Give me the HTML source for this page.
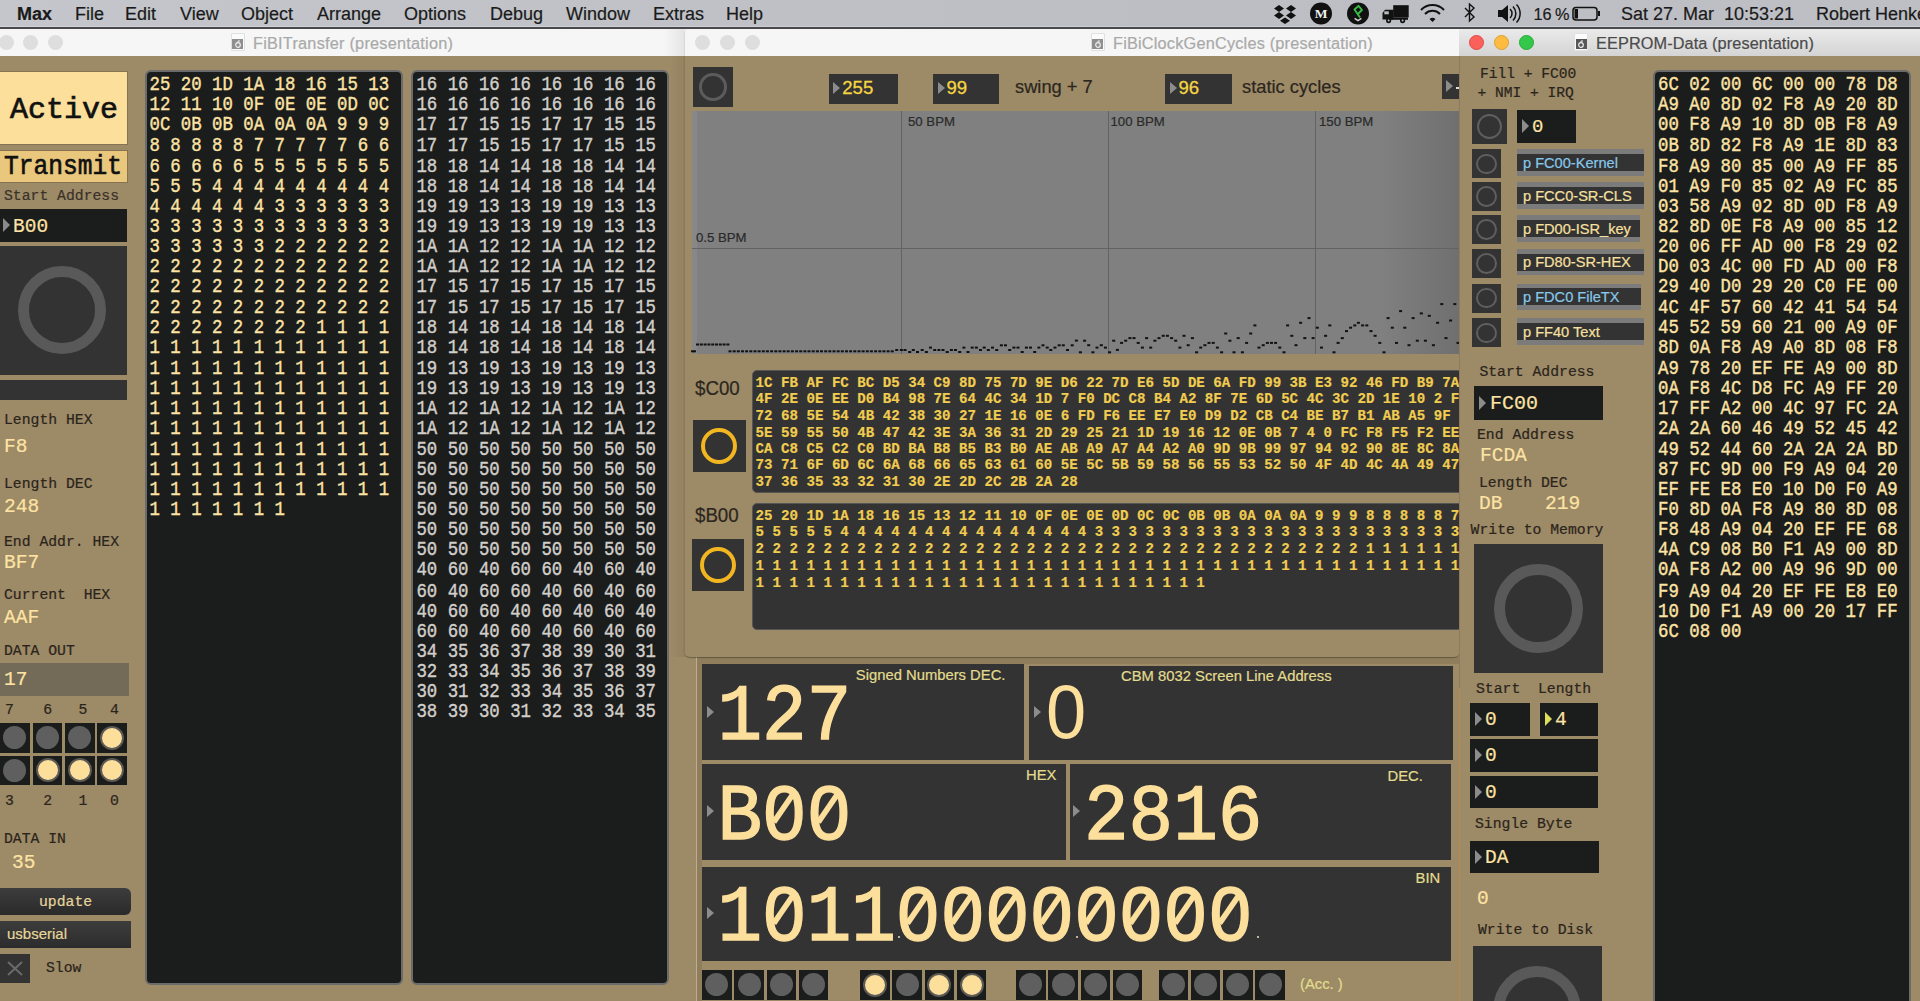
<!DOCTYPE html><html><head><meta charset="utf-8"><style>
html,body{margin:0;padding:0;width:1920px;height:1001px;overflow:hidden;background:#9d8a66;}
body>div, .w div{position:absolute;box-sizing:border-box;-webkit-text-stroke:0.2px currentColor;}
</style></head><body>
<div style="left:0px;top:28px;width:686px;height:973px;background:#9d8a66;"></div>
<div style="left:0px;top:28px;width:686px;height:28px;background:#f6f6f6;"></div>
<div style="left:-1.5px;top:34.5px;width:15px;height:15px;background:#dedede;border-radius:50%"></div>
<div style="left:22.5px;top:34.5px;width:15px;height:15px;background:#dedede;border-radius:50%"></div>
<div style="left:47.5px;top:34.5px;width:15px;height:15px;background:#dedede;border-radius:50%"></div>
<div style="left:230.6px;top:33px;width:14px;height:18px;background:#fbfbfb;border:1px solid #e0e0e0;border-radius:1px"></div>
<div style="left:232.1px;top:38.6px;width:11px;height:10px;background:#8f8f8f;"></div>
<svg style="position:absolute;left:233.6px;top:39.5px" width="8" height="8"><circle cx="4" cy="5" r="2.3" stroke="#eee" stroke-width="1.2" fill="none"/><path d="M4 2.5 v-1.5 h2" stroke="#eee" stroke-width="1" fill="none"/></svg>
<div style="left:253px;top:32.95px;font-family:'Liberation Sans', sans-serif;font-size:16.3px;line-height:20.000px;color:#a9a9a9;font-weight:normal;white-space:pre;letter-spacing:0.23px">FiBITransfer (presentation)</div>
<div style="left:0px;top:71px;width:128px;height:74px;background:#fddf9c;border:1px solid #857351;border-left:none"></div>
<div style="left:10px;top:92.02px;font-family:'Liberation Mono', monospace;font-size:30px;line-height:36.000px;color:#111;font-weight:normal;white-space:pre;-webkit-text-stroke:0.7px #111">Active</div>
<div style="left:0px;top:150px;width:128px;height:33px;background:#e9c77d;border:1px solid #857351;border-left:none"></div>
<div style="left:4px;top:152.30px;font-family:'Liberation Mono', monospace;font-size:24.6px;line-height:27.273px;color:#111;font-weight:normal;white-space:pre;transform:scaleY(1.1);transform-origin:0 0;-webkit-text-stroke:0.6px #111">Transmit</div>
<div style="left:4px;top:187.08px;font-family:'Liberation Mono', monospace;font-size:14.75px;line-height:18.000px;color:#3a3128;font-weight:normal;white-space:pre;">Start Address</div>
<div style="left:0px;top:209px;width:127px;height:33px;background:#1b1c1c;"></div>
<div style="left:3px;top:218px;width:0;height:0;border-top:7px solid transparent;border-bottom:7px solid transparent;border-left:7px solid #8a8a8a"></div>
<div style="left:13px;top:216.31px;font-family:'Liberation Mono', monospace;font-size:19.5px;line-height:23.000px;color:#fde3a4;font-weight:normal;white-space:pre;">B00</div>
<div style="left:0px;top:246px;width:127px;height:129px;background:#333333;"></div>
<div style="left:18px;top:266px;width:88px;height:88px;background:transparent;border:11px solid #595959;border-radius:50%"></div>
<div style="left:0px;top:380px;width:127px;height:20px;background:#333333;"></div>
<div style="left:4px;top:411.08px;font-family:'Liberation Mono', monospace;font-size:14.75px;line-height:18.000px;color:#2a241c;font-weight:normal;white-space:pre;">Length HEX</div>
<div style="left:4px;top:436.31px;font-family:'Liberation Mono', monospace;font-size:19.5px;line-height:23.000px;color:#fde3a4;font-weight:normal;white-space:pre;">F8</div>
<div style="left:4px;top:474.58px;font-family:'Liberation Mono', monospace;font-size:14.75px;line-height:18.000px;color:#2a241c;font-weight:normal;white-space:pre;">Length DEC</div>
<div style="left:4px;top:496.01px;font-family:'Liberation Mono', monospace;font-size:19.5px;line-height:23.000px;color:#fde3a4;font-weight:normal;white-space:pre;">248</div>
<div style="left:4px;top:533.08px;font-family:'Liberation Mono', monospace;font-size:14.75px;line-height:18.000px;color:#2a241c;font-weight:normal;white-space:pre;">End Addr. HEX</div>
<div style="left:4px;top:552.31px;font-family:'Liberation Mono', monospace;font-size:19.5px;line-height:23.000px;color:#fde3a4;font-weight:normal;white-space:pre;">BF7</div>
<div style="left:4px;top:586.08px;font-family:'Liberation Mono', monospace;font-size:14.75px;line-height:18.000px;color:#2a241c;font-weight:normal;white-space:pre;">Current  HEX</div>
<div style="left:4px;top:607.31px;font-family:'Liberation Mono', monospace;font-size:19.5px;line-height:23.000px;color:#fde3a4;font-weight:normal;white-space:pre;">AAF</div>
<div style="left:4px;top:642.08px;font-family:'Liberation Mono', monospace;font-size:14.75px;line-height:18.000px;color:#2a241c;font-weight:normal;white-space:pre;">DATA OUT</div>
<div style="left:0px;top:663px;width:129px;height:33px;background:#736a58;"></div>
<div style="left:4px;top:669.31px;font-family:'Liberation Mono', monospace;font-size:19.5px;line-height:23.000px;color:#fde3a4;font-weight:normal;white-space:pre;">17</div>
<div style="left:5px;top:701.08px;font-family:'Liberation Mono', monospace;font-size:14.75px;line-height:18.000px;color:#2a241c;font-weight:normal;white-space:pre;">7</div>
<div style="left:43.3px;top:701.08px;font-family:'Liberation Mono', monospace;font-size:14.75px;line-height:18.000px;color:#2a241c;font-weight:normal;white-space:pre;">6</div>
<div style="left:78.6px;top:701.08px;font-family:'Liberation Mono', monospace;font-size:14.75px;line-height:18.000px;color:#2a241c;font-weight:normal;white-space:pre;">5</div>
<div style="left:110px;top:701.08px;font-family:'Liberation Mono', monospace;font-size:14.75px;line-height:18.000px;color:#2a241c;font-weight:normal;white-space:pre;">4</div>
<div style="left:5px;top:792.08px;font-family:'Liberation Mono', monospace;font-size:14.75px;line-height:18.000px;color:#2a241c;font-weight:normal;white-space:pre;">3</div>
<div style="left:43.3px;top:792.08px;font-family:'Liberation Mono', monospace;font-size:14.75px;line-height:18.000px;color:#2a241c;font-weight:normal;white-space:pre;">2</div>
<div style="left:78.6px;top:792.08px;font-family:'Liberation Mono', monospace;font-size:14.75px;line-height:18.000px;color:#2a241c;font-weight:normal;white-space:pre;">1</div>
<div style="left:110px;top:792.08px;font-family:'Liberation Mono', monospace;font-size:14.75px;line-height:18.000px;color:#2a241c;font-weight:normal;white-space:pre;">0</div>
<div style="left:0px;top:723px;width:29.5px;height:29.5px;background:#1b1c1c;"></div>
<div style="left:3.25px;top:726.25px;width:23px;height:23px;background:#5f5f5f;border-radius:50%"></div>
<div style="left:0px;top:755.5px;width:29.5px;height:29.5px;background:#1b1c1c;"></div>
<div style="left:3.25px;top:758.75px;width:23px;height:23px;background:#5f5f5f;border-radius:50%"></div>
<div style="left:32.8px;top:723px;width:29.5px;height:29.5px;background:#1b1c1c;"></div>
<div style="left:36.05px;top:726.25px;width:23px;height:23px;background:#5f5f5f;border-radius:50%"></div>
<div style="left:32.8px;top:755.5px;width:29.5px;height:29.5px;background:#1b1c1c;"></div>
<div style="left:35.55px;top:758.25px;width:24px;height:24px;background:#fddf9c;border:2.5px solid #5c5a55;border-radius:50%"></div>
<div style="left:65.1px;top:723px;width:29.5px;height:29.5px;background:#1b1c1c;"></div>
<div style="left:68.35px;top:726.25px;width:23px;height:23px;background:#5f5f5f;border-radius:50%"></div>
<div style="left:65.1px;top:755.5px;width:29.5px;height:29.5px;background:#1b1c1c;"></div>
<div style="left:67.85px;top:758.25px;width:24px;height:24px;background:#fddf9c;border:2.5px solid #5c5a55;border-radius:50%"></div>
<div style="left:97.39999999999999px;top:723px;width:29.5px;height:29.5px;background:#1b1c1c;"></div>
<div style="left:100.14999999999999px;top:725.75px;width:24px;height:24px;background:#fddf9c;border:2.5px solid #5c5a55;border-radius:50%"></div>
<div style="left:97.39999999999999px;top:755.5px;width:29.5px;height:29.5px;background:#1b1c1c;"></div>
<div style="left:100.14999999999999px;top:758.25px;width:24px;height:24px;background:#fddf9c;border:2.5px solid #5c5a55;border-radius:50%"></div>
<div style="left:4px;top:829.58px;font-family:'Liberation Mono', monospace;font-size:14.75px;line-height:18.000px;color:#2a241c;font-weight:normal;white-space:pre;">DATA IN</div>
<div style="left:12px;top:852.31px;font-family:'Liberation Mono', monospace;font-size:19.5px;line-height:23.000px;color:#fde3a4;font-weight:normal;white-space:pre;">35</div>
<div style="left:0px;top:888px;width:131px;height:27px;background:linear-gradient(#3d3d3d,#2a2a2a);border-radius:6px;border-top-left-radius:0;border-bottom-left-radius:0"></div>
<div style="left:39px;top:893.08px;font-family:'Liberation Mono', monospace;font-size:14.75px;line-height:18.000px;color:#e6d59a;font-weight:normal;white-space:pre;">update</div>
<div style="left:0px;top:921px;width:131px;height:27px;background:linear-gradient(#3d3d3d,#2c2c2c);"></div>
<div style="left:7px;top:925.30px;font-family:'Liberation Sans', sans-serif;font-size:15px;line-height:18.000px;color:#e6d59a;font-weight:normal;white-space:pre;">usbserial</div>
<div style="left:0px;top:954px;width:30px;height:29px;background:#333333;"></div>
<svg style="position:absolute;left:0;top:954px" width="30" height="29"><path d="M8 8 L22 21 M22 8 L8 21" stroke="#6a6a6a" stroke-width="2"/></svg>
<div style="left:46px;top:959.08px;font-family:'Liberation Mono', monospace;font-size:14.75px;line-height:18.000px;color:#2a241c;font-weight:normal;white-space:pre;">Slow</div>
<div style="left:145px;top:70px;width:258px;height:915px;background:#1b1c1c;border:2px solid #6b6b6b;border-radius:6px"></div>
<div style="left:411px;top:70px;width:257.5px;height:915px;background:#1b1c1c;border:2px solid #6b6b6b;border-radius:6px"></div>
<div style="left:149.5px;top:74.83px;font-family:'Liberation Mono', monospace;font-size:17.38px;line-height:17.136px;color:#fde3a4;font-weight:normal;white-space:pre;transform:scaleY(1.18);transform-origin:0 0;-webkit-text-stroke:0.35px #fde3a4">25 20 1D 1A 18 16 15 13
12 11 10 0F 0E 0E 0D 0C
0C 0B 0B 0A 0A 0A 9 9 9
8 8 8 8 8 7 7 7 7 7 6 6
6 6 6 6 6 5 5 5 5 5 5 5
5 5 5 4 4 4 4 4 4 4 4 4
4 4 4 4 4 4 3 3 3 3 3 3
3 3 3 3 3 3 3 3 3 3 3 3
3 3 3 3 3 3 2 2 2 2 2 2
2 2 2 2 2 2 2 2 2 2 2 2
2 2 2 2 2 2 2 2 2 2 2 2
2 2 2 2 2 2 2 2 2 2 2 2
2 2 2 2 2 2 2 2 1 1 1 1
1 1 1 1 1 1 1 1 1 1 1 1
1 1 1 1 1 1 1 1 1 1 1 1
1 1 1 1 1 1 1 1 1 1 1 1
1 1 1 1 1 1 1 1 1 1 1 1
1 1 1 1 1 1 1 1 1 1 1 1
1 1 1 1 1 1 1 1 1 1 1 1
1 1 1 1 1 1 1 1 1 1 1 1
1 1 1 1 1 1 1 1 1 1 1 1
1 1 1 1 1 1 1</div>
<div style="left:416.4px;top:74.83px;font-family:'Liberation Mono', monospace;font-size:17.38px;line-height:17.136px;color:#d2cfca;font-weight:normal;white-space:pre;transform:scaleY(1.18);transform-origin:0 0;-webkit-text-stroke:0.35px #d2cfca">16 16 16 16 16 16 16 16
16 16 16 16 16 16 16 16
17 17 15 15 17 17 15 15
17 17 15 15 17 17 15 15
18 18 14 14 18 18 14 14
18 18 14 14 18 18 14 14
19 19 13 13 19 19 13 13
19 19 13 13 19 19 13 13
1A 1A 12 12 1A 1A 12 12
1A 1A 12 12 1A 1A 12 12
17 15 17 15 17 15 17 15
17 15 17 15 17 15 17 15
18 14 18 14 18 14 18 14
18 14 18 14 18 14 18 14
19 13 19 13 19 13 19 13
19 13 19 13 19 13 19 13
1A 12 1A 12 1A 12 1A 12
1A 12 1A 12 1A 12 1A 12
50 50 50 50 50 50 50 50
50 50 50 50 50 50 50 50
50 50 50 50 50 50 50 50
50 50 50 50 50 50 50 50
50 50 50 50 50 50 50 50
50 50 50 50 50 50 50 50
40 60 40 60 60 40 60 40
60 40 60 60 40 60 40 60
40 60 60 40 60 40 60 40
60 60 40 60 40 60 40 60
34 35 36 37 38 39 30 31
32 33 34 35 36 37 38 39
30 31 32 33 34 35 36 37
38 39 30 31 32 33 34 35</div>
<div style="left:684px;top:657px;width:776px;height:344px;background:#9d8a66;"></div>
<div style="left:696px;top:657px;width:1px;height:344px;background:#b9ad95;"></div>
<div style="left:697px;top:657px;width:5px;height:344px;background:#8f7d5c;"></div>
<div style="left:697px;top:657px;width:763px;height:7px;background:#8f7d5c;"></div>
<div style="left:702px;top:664px;width:322.4px;height:96.3px;background:#333333;"></div>
<div style="left:1029.4px;top:665.6px;width:423.6px;height:94.4px;background:#333333;"></div>
<div style="left:702px;top:763.8px;width:364px;height:96.5px;background:#333333;"></div>
<div style="left:1069.7px;top:763.8px;width:381.3px;height:96.2px;background:#333333;"></div>
<div style="left:702px;top:866.7px;width:749px;height:94.6px;background:#333333;"></div>
<div style="left:706.8px;top:705.8px;width:0;height:0;border-top:6.85px solid transparent;border-bottom:6.85px solid transparent;border-left:7.8px solid #8c8c8c"></div>
<div style="left:1034px;top:705.5px;width:0;height:0;border-top:6.85px solid transparent;border-bottom:6.85px solid transparent;border-left:7.8px solid #8c8c8c"></div>
<div style="left:706.8px;top:805px;width:0;height:0;border-top:6.85px solid transparent;border-bottom:6.85px solid transparent;border-left:7.8px solid #8c8c8c"></div>
<div style="left:1073px;top:805px;width:0;height:0;border-top:6.85px solid transparent;border-bottom:6.85px solid transparent;border-left:7.8px solid #8c8c8c"></div>
<div style="left:706.8px;top:907px;width:0;height:0;border-top:6.85px solid transparent;border-bottom:6.85px solid transparent;border-left:7.8px solid #8c8c8c"></div>
<div style="left:855.8px;top:665.57px;font-family:'Liberation Sans', sans-serif;font-size:14.8px;line-height:18.000px;color:#e2dc8e;font-weight:normal;white-space:pre;">Signed Numbers DEC.</div>
<div style="left:1121px;top:667.27px;font-family:'Liberation Sans', sans-serif;font-size:14.8px;line-height:18.000px;color:#e2dc8e;font-weight:normal;white-space:pre;">CBM 8032 Screen Line Address</div>
<div style="left:1026px;top:766.47px;font-family:'Liberation Sans', sans-serif;font-size:14.8px;line-height:18.000px;color:#e2dc8e;font-weight:normal;white-space:pre;">HEX</div>
<div style="left:1387.5px;top:766.67px;font-family:'Liberation Sans', sans-serif;font-size:14.8px;line-height:18.000px;color:#e2dc8e;font-weight:normal;white-space:pre;">DEC.</div>
<div style="left:1415.6px;top:868.67px;font-family:'Liberation Sans', sans-serif;font-size:14.8px;line-height:18.000px;color:#e2dc8e;font-weight:normal;white-space:pre;">BIN</div>
<div style="left:717.5px;top:672.85px;font-family:'Liberation Mono', monospace;font-size:74.3px;line-height:82.407px;color:#fddf9c;font-weight:normal;white-space:pre;transform:scaleY(1.08);transform-origin:0 0;-webkit-text-stroke:1.4px #fddf9c">127</div>
<div style="left:1045px;top:665.65px;font-family:'Liberation Sans', sans-serif;font-size:76px;line-height:91.000px;color:#fddf9c;font-weight:normal;white-space:pre;-webkit-text-stroke:0;transform:scaleX(0.95)">0</div>
<div style="left:717.5px;top:772.65px;font-family:'Liberation Mono', monospace;font-size:74.3px;line-height:82.407px;color:#fddf9c;font-weight:normal;white-space:pre;transform:scaleY(1.08);transform-origin:0 0;-webkit-text-stroke:1.4px #fddf9c">B00</div>
<svg style="position:absolute;left:0;top:0;overflow:visible" width="1" height="1"><rect x="778.9" y="804.0" width="11.1" height="15.2" fill="#333333"/><line x1="773.8" y1="822.2" x2="793.7" y2="793.2" stroke="#fddf9c" stroke-width="5.6"/><rect x="823.5" y="804.0" width="11.1" height="15.2" fill="#333333"/><line x1="818.4" y1="822.2" x2="838.2" y2="793.2" stroke="#fddf9c" stroke-width="5.6"/></svg>
<div style="left:1084px;top:772.65px;font-family:'Liberation Mono', monospace;font-size:74.3px;line-height:82.407px;color:#fddf9c;font-weight:normal;white-space:pre;transform:scaleY(1.08);transform-origin:0 0;-webkit-text-stroke:1.4px #fddf9c">2816</div>
<div style="left:717.5px;top:873.75px;font-family:'Liberation Mono', monospace;font-size:74.3px;line-height:82.407px;color:#fddf9c;font-weight:normal;white-space:pre;transform:scaleY(1.08);transform-origin:0 0;-webkit-text-stroke:1.4px #fddf9c">101100000000</div>
<svg style="position:absolute;left:0;top:0;overflow:visible" width="1" height="1"><rect x="778.9" y="905.1" width="11.1" height="15.2" fill="#333333"/><line x1="773.8" y1="923.3" x2="793.7" y2="894.3" stroke="#fddf9c" stroke-width="5.6"/><rect x="912.6" y="905.1" width="11.1" height="15.2" fill="#333333"/><line x1="907.5" y1="923.3" x2="927.4" y2="894.3" stroke="#fddf9c" stroke-width="5.6"/><rect x="957.2" y="905.1" width="11.1" height="15.2" fill="#333333"/><line x1="952.1" y1="923.3" x2="972.0" y2="894.3" stroke="#fddf9c" stroke-width="5.6"/><rect x="1001.8" y="905.1" width="11.1" height="15.2" fill="#333333"/><line x1="996.7" y1="923.3" x2="1016.6" y2="894.3" stroke="#fddf9c" stroke-width="5.6"/><rect x="1046.4" y="905.1" width="11.1" height="15.2" fill="#333333"/><line x1="1041.3" y1="923.3" x2="1061.1" y2="894.3" stroke="#fddf9c" stroke-width="5.6"/><rect x="1090.9" y="905.1" width="11.1" height="15.2" fill="#333333"/><line x1="1085.8" y1="923.3" x2="1105.7" y2="894.3" stroke="#fddf9c" stroke-width="5.6"/><rect x="1135.5" y="905.1" width="11.1" height="15.2" fill="#333333"/><line x1="1130.4" y1="923.3" x2="1150.3" y2="894.3" stroke="#fddf9c" stroke-width="5.6"/><rect x="1180.1" y="905.1" width="11.1" height="15.2" fill="#333333"/><line x1="1175.0" y1="923.3" x2="1194.9" y2="894.3" stroke="#fddf9c" stroke-width="5.6"/><rect x="1224.7" y="905.1" width="11.1" height="15.2" fill="#333333"/><line x1="1219.6" y1="923.3" x2="1239.5" y2="894.3" stroke="#fddf9c" stroke-width="5.6"/></svg>
<div style="left:898px;top:936px;width:2px;height:2px;background:#bdb39a;"></div>
<div style="left:1076px;top:936px;width:2px;height:2px;background:#bdb39a;"></div>
<div style="left:1257px;top:936px;width:2px;height:2px;background:#bdb39a;"></div>
<div style="left:702.0px;top:970px;width:29.5px;height:29.5px;background:#1b1c1c;"></div>
<div style="left:705.25px;top:973.25px;width:23px;height:23px;background:#5f5f5f;border-radius:50%"></div>
<div style="left:734.3px;top:970px;width:29.5px;height:29.5px;background:#1b1c1c;"></div>
<div style="left:737.55px;top:973.25px;width:23px;height:23px;background:#5f5f5f;border-radius:50%"></div>
<div style="left:766.6px;top:970px;width:29.5px;height:29.5px;background:#1b1c1c;"></div>
<div style="left:769.85px;top:973.25px;width:23px;height:23px;background:#5f5f5f;border-radius:50%"></div>
<div style="left:798.9px;top:970px;width:29.5px;height:29.5px;background:#1b1c1c;"></div>
<div style="left:802.15px;top:973.25px;width:23px;height:23px;background:#5f5f5f;border-radius:50%"></div>
<div style="left:860.0px;top:970px;width:29.5px;height:29.5px;background:#1b1c1c;"></div>
<div style="left:862.75px;top:972.75px;width:24px;height:24px;background:#fddf9c;border:2.5px solid #5c5a55;border-radius:50%"></div>
<div style="left:892.3px;top:970px;width:29.5px;height:29.5px;background:#1b1c1c;"></div>
<div style="left:895.55px;top:973.25px;width:23px;height:23px;background:#5f5f5f;border-radius:50%"></div>
<div style="left:924.6px;top:970px;width:29.5px;height:29.5px;background:#1b1c1c;"></div>
<div style="left:927.35px;top:972.75px;width:24px;height:24px;background:#fddf9c;border:2.5px solid #5c5a55;border-radius:50%"></div>
<div style="left:956.9px;top:970px;width:29.5px;height:29.5px;background:#1b1c1c;"></div>
<div style="left:959.65px;top:972.75px;width:24px;height:24px;background:#fddf9c;border:2.5px solid #5c5a55;border-radius:50%"></div>
<div style="left:1016.0px;top:970px;width:29.5px;height:29.5px;background:#1b1c1c;"></div>
<div style="left:1019.25px;top:973.25px;width:23px;height:23px;background:#5f5f5f;border-radius:50%"></div>
<div style="left:1048.3px;top:970px;width:29.5px;height:29.5px;background:#1b1c1c;"></div>
<div style="left:1051.55px;top:973.25px;width:23px;height:23px;background:#5f5f5f;border-radius:50%"></div>
<div style="left:1080.6px;top:970px;width:29.5px;height:29.5px;background:#1b1c1c;"></div>
<div style="left:1083.85px;top:973.25px;width:23px;height:23px;background:#5f5f5f;border-radius:50%"></div>
<div style="left:1112.9px;top:970px;width:29.5px;height:29.5px;background:#1b1c1c;"></div>
<div style="left:1116.15px;top:973.25px;width:23px;height:23px;background:#5f5f5f;border-radius:50%"></div>
<div style="left:1158.5px;top:970px;width:29.5px;height:29.5px;background:#1b1c1c;"></div>
<div style="left:1161.75px;top:973.25px;width:23px;height:23px;background:#5f5f5f;border-radius:50%"></div>
<div style="left:1190.8px;top:970px;width:29.5px;height:29.5px;background:#1b1c1c;"></div>
<div style="left:1194.05px;top:973.25px;width:23px;height:23px;background:#5f5f5f;border-radius:50%"></div>
<div style="left:1223.1px;top:970px;width:29.5px;height:29.5px;background:#1b1c1c;"></div>
<div style="left:1226.35px;top:973.25px;width:23px;height:23px;background:#5f5f5f;border-radius:50%"></div>
<div style="left:1255.4px;top:970px;width:29.5px;height:29.5px;background:#1b1c1c;"></div>
<div style="left:1258.65px;top:973.25px;width:23px;height:23px;background:#5f5f5f;border-radius:50%"></div>
<div style="left:1300px;top:974.87px;font-family:'Liberation Sans', sans-serif;font-size:14.8px;line-height:18.000px;color:#e2dc8e;font-weight:normal;white-space:pre;">(Acc. )</div>
<div style="left:684px;top:56px;width:776px;height:601px;background:#9d8a66;border-radius:0 0 6px 6px;box-shadow:0 1px 1px rgba(0,0,0,0.3)"></div>
<div style="left:684px;top:56px;width:1px;height:601px;background:#8c7a58;"></div>
<div style="left:664px;top:29px;width:20px;height:27px;background:linear-gradient(90deg,rgba(0,0,0,0),rgba(0,0,0,0.07));"></div>
<div style="left:670px;top:56px;width:14px;height:601px;background:linear-gradient(90deg,rgba(0,0,0,0),rgba(0,0,0,0.06));"></div>
<div style="left:684px;top:28px;width:776px;height:28px;background:#f6f6f6;border-top-left-radius:5px;border-left:1px solid #d8d8d8"></div>
<div style="left:694.5px;top:34.5px;width:15px;height:15px;background:#dedede;border-radius:50%"></div>
<div style="left:719.5px;top:34.5px;width:15px;height:15px;background:#dedede;border-radius:50%"></div>
<div style="left:744.5px;top:34.5px;width:15px;height:15px;background:#dedede;border-radius:50%"></div>
<div style="left:1090.5px;top:33px;width:14px;height:18px;background:#fbfbfb;border:1px solid #e0e0e0;border-radius:1px"></div>
<div style="left:1092.0px;top:38.6px;width:11px;height:10px;background:#8f8f8f;"></div>
<svg style="position:absolute;left:1093.5px;top:39.5px" width="8" height="8"><circle cx="4" cy="5" r="2.3" stroke="#eee" stroke-width="1.2" fill="none"/><path d="M4 2.5 v-1.5 h2" stroke="#eee" stroke-width="1" fill="none"/></svg>
<div style="left:1113px;top:32.95px;font-family:'Liberation Sans', sans-serif;font-size:16.3px;line-height:20.000px;color:#a9a9a9;font-weight:normal;white-space:pre;letter-spacing:0.2px">FiBiClockGenCycles (presentation)</div>
<div style="left:693px;top:67px;width:40px;height:40px;background:#333333;"></div>
<div style="left:699.25px;top:73.25px;width:27.5px;height:27.5px;background:transparent;border:3px solid #5c5c5c;border-radius:50%"></div>
<div style="left:828.75px;top:73.5px;width:68.75px;height:30.5px;background:#333333;"></div>
<div style="left:833.25px;top:82px;width:0;height:0;border-top:6.8px solid transparent;border-bottom:6.8px solid transparent;border-left:7px solid #8c8c8c"></div>
<div style="left:842.25px;top:76.55px;font-family:'Liberation Sans', sans-serif;font-size:18.6px;line-height:22.000px;color:#f5d444;font-weight:normal;white-space:pre;-webkit-text-stroke:0.3px #f5d444">255</div>
<div style="left:933px;top:73.5px;width:66.4px;height:30.5px;background:#333333;"></div>
<div style="left:937.5px;top:82px;width:0;height:0;border-top:6.8px solid transparent;border-bottom:6.8px solid transparent;border-left:7px solid #8c8c8c"></div>
<div style="left:946.5px;top:76.55px;font-family:'Liberation Sans', sans-serif;font-size:18.6px;line-height:22.000px;color:#f5d444;font-weight:normal;white-space:pre;-webkit-text-stroke:0.3px #f5d444">99</div>
<div style="left:1165px;top:73.5px;width:66.7px;height:30.5px;background:#333333;"></div>
<div style="left:1169.5px;top:82px;width:0;height:0;border-top:6.8px solid transparent;border-bottom:6.8px solid transparent;border-left:7px solid #8c8c8c"></div>
<div style="left:1178.5px;top:76.55px;font-family:'Liberation Sans', sans-serif;font-size:18.6px;line-height:22.000px;color:#f5d444;font-weight:normal;white-space:pre;-webkit-text-stroke:0.3px #f5d444">96</div>
<div style="left:1015px;top:76.16px;font-family:'Liberation Sans', sans-serif;font-size:18.3px;line-height:22.000px;color:#2b2620;font-weight:normal;white-space:pre;">swing + 7</div>
<div style="left:1242px;top:75.96px;font-family:'Liberation Sans', sans-serif;font-size:18.3px;line-height:22.000px;color:#2b2620;font-weight:normal;white-space:pre;">static cycles</div>
<div style="left:1441.7px;top:74px;width:18px;height:25px;background:#333333;"></div>
<div style="left:1446px;top:80px;width:0;height:0;border-top:6.8px solid transparent;border-bottom:6.8px solid transparent;border-left:7px solid #8c8c8c"></div>
<div style="left:1456px;top:87px;width:3px;height:1.5px;background:#ddd;"></div>
<div style="left:692.2px;top:111px;width:767px;height:243px;background:#808080;"></div>
<div style="left:692.2px;top:111px;width:5px;height:243px;background:#888888;"></div>
<div style="left:1380px;top:111px;width:79px;height:243px;background:linear-gradient(90deg,rgba(0,0,0,0),rgba(0,0,0,0.13));"></div>
<div style="left:901px;top:111px;width:1.2px;height:243px;background:#636363;"></div>
<div style="left:1108px;top:111px;width:1.2px;height:243px;background:#636363;"></div>
<div style="left:1315px;top:111px;width:1.2px;height:243px;background:#636363;"></div>
<div style="left:692.2px;top:247.5px;width:767px;height:1.2px;background:#636363;"></div>
<div style="left:908px;top:114.42px;font-family:'Liberation Sans', sans-serif;font-size:13.2px;line-height:16.000px;color:#2a2a2a;font-weight:normal;white-space:pre;">50 BPM</div>
<div style="left:1110.5px;top:114.42px;font-family:'Liberation Sans', sans-serif;font-size:13.2px;line-height:16.000px;color:#2a2a2a;font-weight:normal;white-space:pre;">100 BPM</div>
<div style="left:1319px;top:114.42px;font-family:'Liberation Sans', sans-serif;font-size:13.2px;line-height:16.000px;color:#2a2a2a;font-weight:normal;white-space:pre;">150 BPM</div>
<div style="left:696px;top:229.92px;font-family:'Liberation Sans', sans-serif;font-size:13.2px;line-height:16.000px;color:#2a2a2a;font-weight:normal;white-space:pre;">0.5 BPM</div>
<svg style="position:absolute;left:0;top:0;overflow:visible" width="1" height="1"><rect x="696.0" y="343.5" width="3" height="2" fill="#111"/><rect x="699.8" y="343.5" width="3" height="2" fill="#111"/><rect x="703.6" y="343.5" width="3" height="2" fill="#111"/><rect x="707.4" y="343.5" width="3" height="2" fill="#111"/><rect x="711.2" y="343.5" width="3" height="2" fill="#111"/><rect x="715.0" y="343.5" width="3" height="2" fill="#111"/><rect x="718.8" y="343.5" width="3" height="2" fill="#111"/><rect x="722.6" y="343.5" width="3" height="2" fill="#111"/><rect x="726.4" y="343.5" width="3" height="2" fill="#111"/><rect x="691.0" y="350.3" width="3" height="2" fill="#111"/><rect x="693.0" y="350.3" width="3" height="2" fill="#111"/><rect x="728.5" y="350.3" width="3" height="2" fill="#111"/><rect x="732.7" y="350.3" width="3" height="2" fill="#111"/><rect x="736.8" y="350.3" width="3" height="2" fill="#111"/><rect x="741.0" y="350.3" width="3" height="2" fill="#111"/><rect x="745.1" y="350.3" width="3" height="2" fill="#111"/><rect x="749.3" y="350.3" width="3" height="2" fill="#111"/><rect x="753.5" y="350.3" width="3" height="2" fill="#111"/><rect x="757.6" y="350.3" width="3" height="2" fill="#111"/><rect x="761.8" y="350.3" width="3" height="2" fill="#111"/><rect x="765.9" y="350.3" width="3" height="2" fill="#111"/><rect x="770.1" y="350.3" width="3" height="2" fill="#111"/><rect x="774.3" y="350.3" width="3" height="2" fill="#111"/><rect x="778.4" y="350.3" width="3" height="2" fill="#111"/><rect x="782.6" y="350.3" width="3" height="2" fill="#111"/><rect x="786.7" y="350.3" width="3" height="2" fill="#111"/><rect x="790.9" y="350.3" width="3" height="2" fill="#111"/><rect x="795.1" y="350.3" width="3" height="2" fill="#111"/><rect x="799.2" y="350.3" width="3" height="2" fill="#111"/><rect x="803.4" y="350.3" width="3" height="2" fill="#111"/><rect x="807.5" y="350.3" width="3" height="2" fill="#111"/><rect x="811.7" y="350.3" width="3" height="2" fill="#111"/><rect x="815.9" y="350.3" width="3" height="2" fill="#111"/><rect x="820.0" y="350.3" width="3" height="2" fill="#111"/><rect x="824.2" y="350.3" width="3" height="2" fill="#111"/><rect x="828.3" y="350.3" width="3" height="2" fill="#111"/><rect x="832.5" y="350.3" width="3" height="2" fill="#111"/><rect x="836.7" y="350.3" width="3" height="2" fill="#111"/><rect x="840.8" y="350.3" width="3" height="2" fill="#111"/><rect x="845.0" y="350.3" width="3" height="2" fill="#111"/><rect x="849.1" y="350.3" width="3" height="2" fill="#111"/><rect x="853.3" y="350.3" width="3" height="2" fill="#111"/><rect x="857.5" y="350.3" width="3" height="2" fill="#111"/><rect x="861.6" y="350.3" width="3" height="2" fill="#111"/><rect x="865.8" y="350.3" width="3" height="2" fill="#111"/><rect x="869.9" y="350.3" width="3" height="2" fill="#111"/><rect x="874.1" y="350.3" width="3" height="2" fill="#111"/><rect x="878.3" y="350.3" width="3" height="2" fill="#111"/><rect x="882.4" y="350.3" width="3" height="2" fill="#111"/><rect x="886.6" y="350.3" width="3" height="2" fill="#111"/><rect x="890.7" y="350.3" width="3" height="2" fill="#111"/><rect x="895.2" y="349.0" width="3" height="2" fill="#111"/><rect x="899.9" y="349.0" width="3" height="2" fill="#111"/><rect x="903.5" y="349.0" width="3" height="2" fill="#111"/><rect x="908.2" y="351.0" width="3" height="2" fill="#111"/><rect x="911.8" y="349.0" width="3" height="2" fill="#111"/><rect x="916.0" y="351.0" width="3" height="2" fill="#111"/><rect x="920.7" y="349.0" width="3" height="2" fill="#111"/><rect x="924.9" y="351.0" width="3" height="2" fill="#111"/><rect x="929.0" y="346.6" width="3" height="2" fill="#111"/><rect x="933.2" y="349.0" width="3" height="2" fill="#111"/><rect x="937.4" y="349.0" width="3" height="2" fill="#111"/><rect x="941.5" y="349.0" width="3" height="2" fill="#111"/><rect x="945.7" y="351.0" width="3" height="2" fill="#111"/><rect x="949.9" y="349.0" width="3" height="2" fill="#111"/><rect x="954.0" y="349.0" width="3" height="2" fill="#111"/><rect x="958.2" y="351.0" width="3" height="2" fill="#111"/><rect x="962.4" y="346.6" width="3" height="2" fill="#111"/><rect x="966.5" y="351.0" width="3" height="2" fill="#111"/><rect x="970.7" y="346.6" width="3" height="2" fill="#111"/><rect x="974.9" y="346.6" width="3" height="2" fill="#111"/><rect x="979.0" y="349.0" width="3" height="2" fill="#111"/><rect x="982.7" y="346.6" width="3" height="2" fill="#111"/><rect x="986.8" y="349.0" width="3" height="2" fill="#111"/><rect x="991.0" y="346.6" width="3" height="2" fill="#111"/><rect x="995.2" y="349.0" width="3" height="2" fill="#111"/><rect x="999.9" y="344.3" width="3" height="2" fill="#111"/><rect x="1004.0" y="344.3" width="3" height="2" fill="#111"/><rect x="1008.2" y="349.0" width="3" height="2" fill="#111"/><rect x="1012.4" y="346.6" width="3" height="2" fill="#111"/><rect x="1016.5" y="346.6" width="3" height="2" fill="#111"/><rect x="1020.7" y="351.0" width="3" height="2" fill="#111"/><rect x="1024.9" y="346.6" width="3" height="2" fill="#111"/><rect x="1029.0" y="346.6" width="3" height="2" fill="#111"/><rect x="1033.2" y="351.0" width="3" height="2" fill="#111"/><rect x="1037.4" y="346.6" width="3" height="2" fill="#111"/><rect x="1041.5" y="344.3" width="3" height="2" fill="#111"/><rect x="1045.7" y="346.6" width="3" height="2" fill="#111"/><rect x="1049.3" y="349.0" width="3" height="2" fill="#111"/><rect x="1053.5" y="346.6" width="3" height="2" fill="#111"/><rect x="1057.7" y="344.3" width="3" height="2" fill="#111"/><rect x="1061.8" y="344.3" width="3" height="2" fill="#111"/><rect x="1066.0" y="349.0" width="3" height="2" fill="#111"/><rect x="1070.7" y="344.3" width="3" height="2" fill="#111"/><rect x="1074.9" y="339.6" width="3" height="2" fill="#111"/><rect x="1078.9" y="351.3" width="3" height="2" fill="#111"/><rect x="1083.1" y="339.7" width="3" height="2" fill="#111"/><rect x="1087.2" y="344.2" width="3" height="2" fill="#111"/><rect x="1091.4" y="351.3" width="3" height="2" fill="#111"/><rect x="1095.5" y="346.6" width="3" height="2" fill="#111"/><rect x="1099.8" y="344.2" width="3" height="2" fill="#111"/><rect x="1103.9" y="346.6" width="3" height="2" fill="#111"/><rect x="1108.1" y="351.3" width="3" height="2" fill="#111"/><rect x="1112.2" y="339.7" width="3" height="2" fill="#111"/><rect x="1115.9" y="348.9" width="3" height="2" fill="#111"/><rect x="1120.1" y="341.9" width="3" height="2" fill="#111"/><rect x="1124.2" y="339.7" width="3" height="2" fill="#111"/><rect x="1128.4" y="337.1" width="3" height="2" fill="#111"/><rect x="1132.5" y="337.1" width="3" height="2" fill="#111"/><rect x="1136.7" y="341.9" width="3" height="2" fill="#111"/><rect x="1140.9" y="346.6" width="3" height="2" fill="#111"/><rect x="1145.1" y="337.1" width="3" height="2" fill="#111"/><rect x="1149.2" y="346.6" width="3" height="2" fill="#111"/><rect x="1153.4" y="339.7" width="3" height="2" fill="#111"/><rect x="1157.5" y="337.1" width="3" height="2" fill="#111"/><rect x="1161.7" y="334.8" width="3" height="2" fill="#111"/><rect x="1165.9" y="334.8" width="3" height="2" fill="#111"/><rect x="1170.1" y="337.1" width="3" height="2" fill="#111"/><rect x="1174.2" y="339.7" width="3" height="2" fill="#111"/><rect x="1178.4" y="346.6" width="3" height="2" fill="#111"/><rect x="1182.5" y="334.8" width="3" height="2" fill="#111"/><rect x="1186.7" y="344.2" width="3" height="2" fill="#111"/><rect x="1190.9" y="337.1" width="3" height="2" fill="#111"/><rect x="1195.1" y="351.3" width="3" height="2" fill="#111"/><rect x="1199.2" y="346.6" width="3" height="2" fill="#111"/><rect x="1203.4" y="344.2" width="3" height="2" fill="#111"/><rect x="1207.5" y="341.9" width="3" height="2" fill="#111"/><rect x="1211.7" y="341.9" width="3" height="2" fill="#111"/><rect x="1215.9" y="346.6" width="3" height="2" fill="#111"/><rect x="1220.1" y="351.3" width="3" height="2" fill="#111"/><rect x="1224.2" y="332.5" width="3" height="2" fill="#111"/><rect x="1228.4" y="339.7" width="3" height="2" fill="#111"/><rect x="1232.5" y="351.3" width="3" height="2" fill="#111"/><rect x="1236.7" y="337.1" width="3" height="2" fill="#111"/><rect x="1240.9" y="351.3" width="3" height="2" fill="#111"/><rect x="1245.1" y="341.9" width="3" height="2" fill="#111"/><rect x="1249.2" y="332.5" width="3" height="2" fill="#111"/><rect x="1253.4" y="324.4" width="3" height="2" fill="#111"/><rect x="1257.5" y="346.6" width="3" height="2" fill="#111"/><rect x="1261.7" y="344.2" width="3" height="2" fill="#111"/><rect x="1265.9" y="341.9" width="3" height="2" fill="#111"/><rect x="1270.0" y="341.9" width="3" height="2" fill="#111"/><rect x="1274.1" y="341.9" width="3" height="2" fill="#111"/><rect x="1278.3" y="346.6" width="3" height="2" fill="#111"/><rect x="1282.5" y="351.3" width="3" height="2" fill="#111"/><rect x="1286.1" y="324.4" width="3" height="2" fill="#111"/><rect x="1290.3" y="334.8" width="3" height="2" fill="#111"/><rect x="1294.5" y="344.2" width="3" height="2" fill="#111"/><rect x="1299.1" y="321.8" width="3" height="2" fill="#111"/><rect x="1303.3" y="337.1" width="3" height="2" fill="#111"/><rect x="1307.5" y="317.1" width="3" height="2" fill="#111"/><rect x="1311.6" y="337.1" width="3" height="2" fill="#111"/><rect x="1315.8" y="326.7" width="3" height="2" fill="#111"/><rect x="1320.0" y="346.6" width="3" height="2" fill="#111"/><rect x="1324.1" y="334.8" width="3" height="2" fill="#111"/><rect x="1328.3" y="324.4" width="3" height="2" fill="#111"/><rect x="1332.5" y="351.3" width="3" height="2" fill="#111"/><rect x="1336.6" y="341.9" width="3" height="2" fill="#111"/><rect x="1340.8" y="337.1" width="3" height="2" fill="#111"/><rect x="1345.0" y="330.1" width="3" height="2" fill="#111"/><rect x="1349.1" y="326.7" width="3" height="2" fill="#111"/><rect x="1353.3" y="324.4" width="3" height="2" fill="#111"/><rect x="1356.9" y="321.8" width="3" height="2" fill="#111"/><rect x="1361.1" y="324.4" width="3" height="2" fill="#111"/><rect x="1365.3" y="324.4" width="3" height="2" fill="#111"/><rect x="1369.5" y="330.1" width="3" height="2" fill="#111"/><rect x="1373.6" y="334.8" width="3" height="2" fill="#111"/><rect x="1378.3" y="341.9" width="3" height="2" fill="#111"/><rect x="1382.5" y="351.3" width="3" height="2" fill="#111"/><rect x="1386.6" y="317.1" width="3" height="2" fill="#111"/><rect x="1390.8" y="326.7" width="3" height="2" fill="#111"/><rect x="1395.0" y="341.9" width="3" height="2" fill="#111"/><rect x="1399.1" y="310.1" width="3" height="2" fill="#111"/><rect x="1403.3" y="326.7" width="3" height="2" fill="#111"/><rect x="1407.5" y="344.2" width="3" height="2" fill="#111"/><rect x="1411.6" y="317.1" width="3" height="2" fill="#111"/><rect x="1415.8" y="339.7" width="3" height="2" fill="#111"/><rect x="1419.8" y="312.4" width="3" height="2" fill="#111"/><rect x="1423.9" y="339.7" width="3" height="2" fill="#111"/><rect x="1427.8" y="314.8" width="3" height="2" fill="#111"/><rect x="1431.9" y="344.2" width="3" height="2" fill="#111"/><rect x="1436.1" y="321.8" width="3" height="2" fill="#111"/><rect x="1440.3" y="303.1" width="3" height="2" fill="#111"/><rect x="1444.5" y="337.1" width="3" height="2" fill="#111"/><rect x="1449.1" y="319.5" width="3" height="2" fill="#111"/><rect x="1453.3" y="303.1" width="3" height="2" fill="#111"/><rect x="1456.5" y="341.9" width="3" height="2" fill="#111"/></svg>
<div style="left:695px;top:378.19px;font-family:'Liberation Sans', sans-serif;font-size:18.7px;line-height:20.952px;color:#2b2620;font-weight:normal;white-space:pre;transform:scaleY(1.05);transform-origin:0 0;">$C00</div>
<div style="left:695px;top:504.99px;font-family:'Liberation Sans', sans-serif;font-size:18.7px;line-height:20.952px;color:#2b2620;font-weight:normal;white-space:pre;transform:scaleY(1.05);transform-origin:0 0;">$B00</div>
<div style="left:752.2px;top:369.6px;width:720px;height:123.4px;background:#333333;border:1.5px solid #555;border-radius:5px"></div>
<div style="left:752.2px;top:503px;width:720px;height:127px;background:#333333;border:1.5px solid #555;border-radius:5px"></div>
<div style="left:755.6px;top:374.69px;font-family:'Liberation Mono', monospace;font-size:14.14px;line-height:15.278px;color:#f0cc50;font-weight:bold;white-space:pre;transform:scaleY(1.08);transform-origin:0 0;width:703px;overflow:hidden">1C FB AF FC BC D5 34 C9 8D 75 7D 9E D6 22 7D E6 5D DE 6A FD 99 3B E3 92 46 FD B9 7A
4F 2E 0E EE D0 B4 98 7E 64 4C 34 1D 7 F0 DC C8 B4 A2 8F 7E 6D 5C 4C 3C 2D 1E 10 2 F0
72 68 5E 54 4B 42 38 30 27 1E 16 0E 6 FD F6 EE E7 E0 D9 D2 CB C4 BE B7 B1 AB A5 9F 99
5E 59 55 50 4B 47 42 3E 3A 36 31 2D 29 25 21 1D 19 16 12 0E 0B 7 4 0 FC F8 F5 F2 EE
CA C8 C5 C2 C0 BD BA B8 B5 B3 B0 AE AB A9 A7 A4 A2 A0 9D 9B 99 97 94 92 90 8E 8C 8A
73 71 6F 6D 6C 6A 68 66 65 63 61 60 5E 5C 5B 59 58 56 55 53 52 50 4F 4D 4C 4A 49 47
37 36 35 33 32 31 30 2E 2D 2C 2B 2A 28</div>
<div style="left:755.6px;top:507.94px;font-family:'Liberation Mono', monospace;font-size:14.14px;line-height:15.370px;color:#f0cc50;font-weight:bold;white-space:pre;transform:scaleY(1.08);transform-origin:0 0;width:703px;overflow:hidden">25 20 1D 1A 18 16 15 13 12 11 10 0F 0E 0E 0D 0C 0C 0B 0B 0A 0A 0A 9 9 9 8 8 8 8 8 7 7
5 5 5 5 5 4 4 4 4 4 4 4 4 4 4 4 4 4 4 4 3 3 3 3 3 3 3 3 3 3 3 3 3 3 3 3 3 3 3 3 3 3 3 3
2 2 2 2 2 2 2 2 2 2 2 2 2 2 2 2 2 2 2 2 2 2 2 2 2 2 2 2 2 2 2 2 2 2 2 2 1 1 1 1 1 1 1 1
1 1 1 1 1 1 1 1 1 1 1 1 1 1 1 1 1 1 1 1 1 1 1 1 1 1 1 1 1 1 1 1 1 1 1 1 1 1 1 1 1 1 1 1
1 1 1 1 1 1 1 1 1 1 1 1 1 1 1 1 1 1 1 1 1 1 1 1 1 1 1</div>
<div style="left:693px;top:420px;width:52.5px;height:51.8px;background:#333333;"></div>
<div style="left:701px;top:428px;width:36px;height:36px;background:transparent;border:4px solid #f2b621;border-radius:50%"></div>
<div style="left:692px;top:539px;width:52px;height:51.6px;background:#333333;"></div>
<div style="left:700px;top:547px;width:36px;height:36px;background:transparent;border:4px solid #f2b621;border-radius:50%"></div>
<div style="left:1459px;top:28px;width:461px;height:973px;background:#9d8a66;"></div>
<div style="left:1459px;top:56px;width:1px;height:945px;background:#8c7b5c;"></div>
<div style="left:1459px;top:28px;width:461px;height:28px;background:linear-gradient(#ebebeb,#d4d4d4);"></div>
<div style="left:1458.5px;top:688px;width:1px;height:313px;background:#b98a4e;"></div>
<div style="left:1468.5px;top:34.5px;width:15px;height:15px;background:#fc605b;border:0.5px solid #de4a45;border-radius:50%"></div>
<div style="left:1493.5px;top:34.5px;width:15px;height:15px;background:#fdbc40;border:0.5px solid #dea033;border-radius:50%"></div>
<div style="left:1518.5px;top:34.5px;width:15px;height:15px;background:#34c84a;border:0.5px solid #27aa36;border-radius:50%"></div>
<div style="left:1574px;top:33px;width:14px;height:18px;background:#fbfbfb;border:1px solid #e0e0e0;border-radius:1px"></div>
<div style="left:1575.5px;top:38.6px;width:11px;height:10px;background:#575757;"></div>
<svg style="position:absolute;left:1577px;top:39.5px" width="8" height="8"><circle cx="4" cy="5" r="2.3" stroke="#eee" stroke-width="1.2" fill="none"/><path d="M4 2.5 v-1.5 h2" stroke="#eee" stroke-width="1" fill="none"/></svg>
<div style="left:1596px;top:32.95px;font-family:'Liberation Sans', sans-serif;font-size:16.3px;line-height:20.000px;color:#4b4b4b;font-weight:normal;white-space:pre;letter-spacing:0.1px">EEPROM-Data (presentation)</div>
<div style="left:1480px;top:65.31px;font-family:'Liberation Mono', monospace;font-size:14.6px;line-height:18.000px;color:#2a241c;font-weight:normal;white-space:pre;">Fill + FC00</div>
<div style="left:1477.4px;top:84.01px;font-family:'Liberation Mono', monospace;font-size:14.6px;line-height:18.000px;color:#2a241c;font-weight:normal;white-space:pre;">+ NMI + IRQ</div>
<div style="left:1471.8px;top:108.6px;width:35.2px;height:35.1px;background:#333333;"></div>
<div style="left:1476.8000000000002px;top:113.60000000000001px;width:25.2px;height:25.2px;background:transparent;border:2.4px solid #5f5f5f;border-radius:50%"></div>
<div style="left:1517.3px;top:109.7px;width:58.4px;height:32.9px;background:#1b1c1c;"></div>
<div style="left:1522px;top:119px;width:0;height:0;border-top:7.0px solid transparent;border-bottom:7.0px solid transparent;border-left:7px solid #8c8c8c"></div>
<div style="left:1532px;top:115.94px;font-family:'Liberation Mono', monospace;font-size:19px;line-height:23.000px;color:#fde3a4;font-weight:normal;white-space:pre;">0</div>
<div style="left:1471.8px;top:149.3px;width:29.2px;height:29.2px;background:#333333;"></div>
<div style="left:1476.0px;top:153.5px;width:20.8px;height:20.8px;background:transparent;border:2.3px solid #5f5f5f;border-radius:50%"></div>
<div style="left:1517.3px;top:149.3px;width:126.29999999999995px;height:26.5px;background:#7b7b7b;"></div>
<div style="left:1517.3px;top:154.10000000000002px;width:126.29999999999995px;height:17px;background:#333333;"></div>
<div style="left:1523px;top:153.84px;font-family:'Liberation Sans', sans-serif;font-size:14.6px;line-height:18.000px;color:#86c8ea;font-weight:normal;white-space:pre;">p FC00-Kernel</div>
<div style="left:1471.8px;top:182px;width:29.2px;height:29.2px;background:#333333;"></div>
<div style="left:1476.0px;top:186.2px;width:20.8px;height:20.8px;background:transparent;border:2.3px solid #5f5f5f;border-radius:50%"></div>
<div style="left:1517.3px;top:182px;width:126.29999999999995px;height:26.5px;background:#7b7b7b;"></div>
<div style="left:1517.3px;top:186.8px;width:126.29999999999995px;height:17px;background:#333333;"></div>
<div style="left:1523px;top:186.54px;font-family:'Liberation Sans', sans-serif;font-size:14.6px;line-height:18.000px;color:#f8e0a0;font-weight:normal;white-space:pre;">p FCC0-SR-CLS</div>
<div style="left:1471.8px;top:215.2px;width:29.2px;height:29.2px;background:#333333;"></div>
<div style="left:1476.0px;top:219.39999999999998px;width:20.8px;height:20.8px;background:transparent;border:2.3px solid #5f5f5f;border-radius:50%"></div>
<div style="left:1517.3px;top:215.2px;width:122.70000000000005px;height:26.5px;background:#7b7b7b;"></div>
<div style="left:1517.3px;top:220.0px;width:122.70000000000005px;height:17px;background:#333333;"></div>
<div style="left:1523px;top:219.74px;font-family:'Liberation Sans', sans-serif;font-size:14.6px;line-height:18.000px;color:#f8e0a0;font-weight:normal;white-space:pre;">p FD00-ISR_key</div>
<div style="left:1471.8px;top:248.8px;width:29.2px;height:29.2px;background:#333333;"></div>
<div style="left:1476.0px;top:253.00000000000003px;width:20.8px;height:20.8px;background:transparent;border:2.3px solid #5f5f5f;border-radius:50%"></div>
<div style="left:1517.3px;top:248.8px;width:126.29999999999995px;height:26.5px;background:#7b7b7b;"></div>
<div style="left:1517.3px;top:253.60000000000002px;width:126.29999999999995px;height:17px;background:#333333;"></div>
<div style="left:1523px;top:253.34px;font-family:'Liberation Sans', sans-serif;font-size:14.6px;line-height:18.000px;color:#f8e0a0;font-weight:normal;white-space:pre;">p FD80-SR-HEX</div>
<div style="left:1471.8px;top:283.5px;width:29.2px;height:29.2px;background:#333333;"></div>
<div style="left:1476.0px;top:287.70000000000005px;width:20.8px;height:20.8px;background:transparent;border:2.3px solid #5f5f5f;border-radius:50%"></div>
<div style="left:1517.3px;top:283.5px;width:123.70000000000005px;height:26.5px;background:#7b7b7b;"></div>
<div style="left:1517.3px;top:288.3px;width:123.70000000000005px;height:17px;background:#333333;"></div>
<div style="left:1523px;top:288.04px;font-family:'Liberation Sans', sans-serif;font-size:14.6px;line-height:18.000px;color:#86c8ea;font-weight:normal;white-space:pre;">p FDC0 FileTX</div>
<div style="left:1471.8px;top:318.3px;width:29.2px;height:29.2px;background:#333333;"></div>
<div style="left:1476.0px;top:322.50000000000006px;width:20.8px;height:20.8px;background:transparent;border:2.3px solid #5f5f5f;border-radius:50%"></div>
<div style="left:1517.3px;top:318.3px;width:126.29999999999995px;height:26.5px;background:#7b7b7b;"></div>
<div style="left:1517.3px;top:323.1px;width:126.29999999999995px;height:17px;background:#333333;"></div>
<div style="left:1523px;top:322.84px;font-family:'Liberation Sans', sans-serif;font-size:14.6px;line-height:18.000px;color:#f8e0a0;font-weight:normal;white-space:pre;">p FF40 Text</div>
<div style="left:1479.4px;top:363.08px;font-family:'Liberation Mono', monospace;font-size:14.75px;line-height:18.000px;color:#2a241c;font-weight:normal;white-space:pre;">Start Address</div>
<div style="left:1474px;top:386.4px;width:129px;height:33.2px;background:#1b1c1c;"></div>
<div style="left:1479px;top:396px;width:0;height:0;border-top:7.0px solid transparent;border-bottom:7.0px solid transparent;border-left:7px solid #8c8c8c"></div>
<div style="left:1490px;top:392.28px;font-family:'Liberation Mono', monospace;font-size:20px;line-height:24.000px;color:#fde3a4;font-weight:normal;white-space:pre;">FC00</div>
<div style="left:1477px;top:426.48px;font-family:'Liberation Mono', monospace;font-size:14.75px;line-height:18.000px;color:#2a241c;font-weight:normal;white-space:pre;">End Address</div>
<div style="left:1480px;top:444.91px;font-family:'Liberation Mono', monospace;font-size:19.5px;line-height:23.000px;color:#fde3a4;font-weight:normal;white-space:pre;">FCDA</div>
<div style="left:1479px;top:474.08px;font-family:'Liberation Mono', monospace;font-size:14.75px;line-height:18.000px;color:#2a241c;font-weight:normal;white-space:pre;">Length DEC</div>
<div style="left:1479px;top:493.31px;font-family:'Liberation Mono', monospace;font-size:19.5px;line-height:23.000px;color:#fde3a4;font-weight:normal;white-space:pre;">DB</div>
<div style="left:1545px;top:493.31px;font-family:'Liberation Mono', monospace;font-size:19.5px;line-height:23.000px;color:#fde3a4;font-weight:normal;white-space:pre;">219</div>
<div style="left:1470.6px;top:521.08px;font-family:'Liberation Mono', monospace;font-size:14.75px;line-height:18.000px;color:#2a241c;font-weight:normal;white-space:pre;">Write to Memory</div>
<div style="left:1474px;top:544px;width:129px;height:128.6px;background:#333333;"></div>
<div style="left:1494.3px;top:564.3000000000001px;width:88.6px;height:88.6px;background:transparent;border:11px solid #595959;border-radius:50%"></div>
<div style="left:1476px;top:680.08px;font-family:'Liberation Mono', monospace;font-size:14.75px;line-height:18.000px;color:#2a241c;font-weight:normal;white-space:pre;">Start</div>
<div style="left:1538px;top:680.08px;font-family:'Liberation Mono', monospace;font-size:14.75px;line-height:18.000px;color:#2a241c;font-weight:normal;white-space:pre;">Length</div>
<div style="left:1470.4px;top:703px;width:59.2px;height:32.6px;background:#1b1c1c;"></div>
<div style="left:1475px;top:712px;width:0;height:0;border-top:7.0px solid transparent;border-bottom:7.0px solid transparent;border-left:7px solid #8c8c8c"></div>
<div style="left:1485px;top:709.31px;font-family:'Liberation Mono', monospace;font-size:19.5px;line-height:23.000px;color:#fde3a4;font-weight:normal;white-space:pre;">0</div>
<div style="left:1540px;top:703px;width:58px;height:32.6px;background:#1b1c1c;"></div>
<div style="left:1544.5px;top:712px;width:0;height:0;border-top:7.0px solid transparent;border-bottom:7.0px solid transparent;border-left:7px solid #dede5a"></div>
<div style="left:1555px;top:709.31px;font-family:'Liberation Mono', monospace;font-size:19.5px;line-height:23.000px;color:#fde3a4;font-weight:normal;white-space:pre;">4</div>
<div style="left:1470.4px;top:739px;width:127.6px;height:32.8px;background:#1b1c1c;"></div>
<div style="left:1475px;top:748px;width:0;height:0;border-top:7.0px solid transparent;border-bottom:7.0px solid transparent;border-left:7px solid #8c8c8c"></div>
<div style="left:1485px;top:745.31px;font-family:'Liberation Mono', monospace;font-size:19.5px;line-height:23.000px;color:#fde3a4;font-weight:normal;white-space:pre;">0</div>
<div style="left:1470.4px;top:775.5px;width:127.6px;height:32.8px;background:#1b1c1c;"></div>
<div style="left:1475px;top:784.5px;width:0;height:0;border-top:7.0px solid transparent;border-bottom:7.0px solid transparent;border-left:7px solid #8c8c8c"></div>
<div style="left:1485px;top:781.81px;font-family:'Liberation Mono', monospace;font-size:19.5px;line-height:23.000px;color:#fde3a4;font-weight:normal;white-space:pre;">0</div>
<div style="left:1475px;top:815.08px;font-family:'Liberation Mono', monospace;font-size:14.75px;line-height:18.000px;color:#2a241c;font-weight:normal;white-space:pre;">Single Byte</div>
<div style="left:1470.4px;top:841px;width:128.6px;height:32.4px;background:#1b1c1c;"></div>
<div style="left:1475px;top:850px;width:0;height:0;border-top:7.0px solid transparent;border-bottom:7.0px solid transparent;border-left:7px solid #8c8c8c"></div>
<div style="left:1485px;top:847.31px;font-family:'Liberation Mono', monospace;font-size:19.5px;line-height:23.000px;color:#fde3a4;font-weight:normal;white-space:pre;">DA</div>
<div style="left:1477px;top:887.91px;font-family:'Liberation Mono', monospace;font-size:19.5px;line-height:23.000px;color:#fde3a4;font-weight:normal;white-space:pre;">0</div>
<div style="left:1478px;top:921.38px;font-family:'Liberation Mono', monospace;font-size:14.75px;line-height:18.000px;color:#2a241c;font-weight:normal;white-space:pre;">Write to Disk</div>
<div style="left:1472.6px;top:946px;width:129.4px;height:60px;background:#333333;"></div>
<div style="left:1492.7px;top:965.7px;width:88.6px;height:88.6px;background:transparent;border:11px solid #595959;border-radius:50%"></div>
<div style="left:1653.2px;top:69.8px;width:258px;height:940px;background:#1b1c1c;border:2px solid #6b6b6b;border-radius:6px"></div>
<div style="left:1658px;top:74.53px;font-family:'Liberation Mono', monospace;font-size:17.38px;line-height:17.136px;color:#fde3a4;font-weight:normal;white-space:pre;transform:scaleY(1.18);transform-origin:0 0;-webkit-text-stroke:0.35px #fde3a4">6C 02 00 6C 00 00 78 D8
A9 A0 8D 02 F8 A9 20 8D
00 F8 A9 10 8D 0B F8 A9
0B 8D 82 F8 A9 1E 8D 83
F8 A9 80 85 00 A9 FF 85
01 A9 F0 85 02 A9 FC 85
03 58 A9 02 8D 0D F8 A9
82 8D 0E F8 A9 00 85 12
20 06 FF AD 00 F8 29 02
D0 03 4C 00 FD AD 00 F8
29 40 D0 29 20 C0 FE 00
4C 4F 57 60 42 41 54 54
45 52 59 60 21 00 A9 0F
8D 0A F8 A9 A0 8D 08 F8
A9 78 20 EF FE A9 00 8D
0A F8 4C D8 FC A9 FF 20
17 FF A2 00 4C 97 FC 2A
2A 2A 60 46 49 52 45 42
49 52 44 60 2A 2A 2A BD
87 FC 9D 00 F9 A9 04 20
EF FE E8 E0 10 D0 F0 A9
F0 8D 0A F8 A9 80 8D 08
F8 48 A9 04 20 EF FE 68
4A C9 08 B0 F1 A9 00 8D
0A F8 A2 00 A9 96 9D 00
F9 A9 04 20 EF FE E8 E0
10 D0 F1 A9 00 20 17 FF
6C 08 00</div>
<div style="left:0px;top:0px;width:1920px;height:27px;background:linear-gradient(90deg,#c5c6cb,#bdbec3 60%,#bebfc4);"></div>
<div style="left:0px;top:25.5px;width:1920px;height:1.5px;background:rgba(255,255,255,0.25);"></div>
<div style="left:0px;top:27px;width:1920px;height:1.6px;background:#48484d;"></div>
<div style="left:17px;top:2.76px;font-family:'Liberation Sans', sans-serif;font-size:18px;line-height:22.000px;color:#1a1a1a;font-weight:bold;white-space:pre;">Max</div>
<div style="left:75px;top:2.76px;font-family:'Liberation Sans', sans-serif;font-size:18px;line-height:22.000px;color:#1a1a1a;font-weight:normal;white-space:pre;">File</div>
<div style="left:125px;top:2.76px;font-family:'Liberation Sans', sans-serif;font-size:18px;line-height:22.000px;color:#1a1a1a;font-weight:normal;white-space:pre;">Edit</div>
<div style="left:180px;top:2.76px;font-family:'Liberation Sans', sans-serif;font-size:18px;line-height:22.000px;color:#1a1a1a;font-weight:normal;white-space:pre;">View</div>
<div style="left:241px;top:2.76px;font-family:'Liberation Sans', sans-serif;font-size:18px;line-height:22.000px;color:#1a1a1a;font-weight:normal;white-space:pre;">Object</div>
<div style="left:317px;top:2.76px;font-family:'Liberation Sans', sans-serif;font-size:18px;line-height:22.000px;color:#1a1a1a;font-weight:normal;white-space:pre;">Arrange</div>
<div style="left:404px;top:2.76px;font-family:'Liberation Sans', sans-serif;font-size:18px;line-height:22.000px;color:#1a1a1a;font-weight:normal;white-space:pre;">Options</div>
<div style="left:490px;top:2.76px;font-family:'Liberation Sans', sans-serif;font-size:18px;line-height:22.000px;color:#1a1a1a;font-weight:normal;white-space:pre;">Debug</div>
<div style="left:566px;top:2.76px;font-family:'Liberation Sans', sans-serif;font-size:18px;line-height:22.000px;color:#1a1a1a;font-weight:normal;white-space:pre;">Window</div>
<div style="left:653px;top:2.76px;font-family:'Liberation Sans', sans-serif;font-size:18px;line-height:22.000px;color:#1a1a1a;font-weight:normal;white-space:pre;">Extras</div>
<div style="left:726px;top:2.76px;font-family:'Liberation Sans', sans-serif;font-size:18px;line-height:22.000px;color:#1a1a1a;font-weight:normal;white-space:pre;">Help</div>
<div style="left:1533.5px;top:4.35px;font-family:'Liberation Sans', sans-serif;font-size:16.3px;line-height:20.000px;color:#1a1a1a;font-weight:normal;white-space:pre;">16</div>
<div style="left:1555px;top:4.35px;font-family:'Liberation Sans', sans-serif;font-size:16.3px;line-height:20.000px;color:#1a1a1a;font-weight:normal;white-space:pre;">%</div>
<div style="left:1621px;top:2.76px;font-family:'Liberation Sans', sans-serif;font-size:18px;line-height:22.000px;color:#1a1a1a;font-weight:normal;white-space:pre;">Sat 27. Mar  10:53:21</div>
<div style="left:1816px;top:2.76px;font-family:'Liberation Sans', sans-serif;font-size:18px;line-height:22.000px;color:#1a1a1a;font-weight:normal;white-space:pre;">Robert Henke</div>

<svg style="position:absolute;left:0;top:0;overflow:visible" width="1" height="1">
<g fill="#111">
<path d="M1279 5 l5 3.5 -5 3.5 -5 -3.5z M1291 5 l5 3.5 -5 3.5 -5 -3.5z M1279 12 l5 3.5 -5 3.5 -5 -3.5z M1291 12 l5 3.5 -5 3.5 -5 -3.5z M1285 17.5 l5 3.3 -5 3.3 -5 -3.3z"/>
<circle cx="1321" cy="13.5" r="11"/>
<circle cx="1358" cy="13.5" r="11"/>
<rect x="1393.2" y="5.2" width="15.5" height="12.3"/>
<path d="M1382.5 19.5 v-6.5 l2.5 -3.3 h8.5 v9.8 z"/>
<rect x="1390" y="17.5" width="18" height="2.3"/>
<circle cx="1388.6" cy="20.6" r="2.6"/><circle cx="1402.6" cy="20.6" r="2.6"/>
<path d="M1432.5 22 l-3 -3 a4.5 4.5 0 0 1 6 0 z"/><rect x="1384.3" y="11.3" width="4.5" height="3" fill="#bbb"/><circle cx="1388.6" cy="20.6" r="1" fill="#bbb"/><circle cx="1402.6" cy="20.6" r="1" fill="#bbb"/>
<path d="M1498 10 h4 l6 -5 v17 l-6 -5 h-4 z"/>
<rect x="1574.5" y="9" width="3.5" height="9.5"/>
</g>
<text x="1321" y="18.3" font-family="Liberation Serif" font-weight="bold" font-size="13.5" fill="#f0f0f0" text-anchor="middle" style="-webkit-text-stroke:0">M</text>
<path d="M1360 17.5 L1354.5 9.5 L1358.5 5.8 L1362 10 L1358.3 13.5" stroke="#3cbf45" stroke-width="1.8" fill="none" stroke-linejoin="round"/><path d="M1354.6 18.3 L1358 20.6 L1361.4 18.3" stroke="#cfcfcf" stroke-width="1.5" fill="none"/>
<g fill="none" stroke="#111" stroke-width="2">
<path d="M1421 10 a16 16 0 0 1 23 0"/><path d="M1425 14 a10.5 10.5 0 0 1 15 0"/>
<path d="M1465 8 l9 9 -4.5 4 v-17 l4.5 4 -9 9" stroke-width="1.4"/>
<path d="M1510 9 a6 6 0 0 1 0 9 M1513 6.5 a10 10 0 0 1 0 14 M1516.5 4.5 a13 13 0 0 1 0 18" stroke-width="1.5"/>
<rect x="1573" y="7.5" width="24" height="12.5" rx="3" stroke-width="1.5"/>
</g>
<rect x="1598" y="11" width="2" height="5" fill="#111"/>
</svg>
</body></html>
